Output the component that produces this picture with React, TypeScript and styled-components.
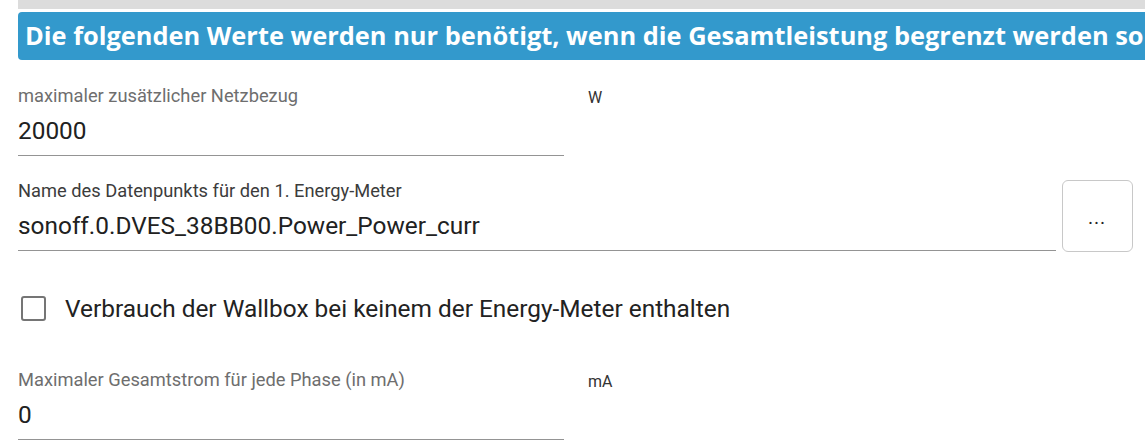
import React from 'react';
import styled, { createGlobalStyle } from 'styled-components';

const GlobalStyle = createGlobalStyle`
  html, body {
    margin: 0;
    padding: 0;
    background: #ffffff;
    overflow: hidden;
  }
  body {
    font-family: Roboto, "Noto Sans", sans-serif;
  }
`;

const Page = styled.div`
  width: 1145px;
  height: 448px;
  padding-left: 18px;
  box-sizing: border-box;
  overflow: hidden;
`;

const TopBar = styled.div`
  height: 9px;
  background: #dcdcdc;
`;

const InfoBanner = styled.div`
  margin-top: 3px;
  height: 48px;
  background: #3399cc;
  border-radius: 4px 0 0 4px;
  color: #ffffff;
  font-family: "Open Sans", "Noto Sans", sans-serif;
  font-weight: 700;
  font-size: 25.4px;
  line-height: 47px;
  padding-left: 7px;
  white-space: nowrap;
  overflow: hidden;
`;

const Form = styled.div`
  display: flex;
  flex-direction: column;
`;

const Row = styled.div<{ $top: number }>`
  display: flex;
  align-items: flex-start;
  margin-top: ${({ $top }) => $top}px;
`;

const Field = styled.div<{ $width: number }>`
  width: ${({ $width }) => $width}px;
  display: flex;
  flex-direction: column;
  border-bottom: 1px solid #949494;
`;

const Label = styled.label<{ $dark?: boolean }>`
  font-size: 18.3px;
  line-height: 20px;
  color: ${({ $dark }) => ($dark ? '#3c3c3c' : '#6e6e6e')};
`;

const Value = styled.div`
  font-size: 24.4px;
  line-height: 28px;
  color: #212121;
  padding: 11px 0 10px;
`;

const Unit = styled.span`
  margin-left: 24px;
  margin-top: 2px;
  font-size: 16px;
  color: #333333;
`;

const BrowseButton = styled.button`
  width: 71px;
  height: 72px;
  margin-left: 6px;
  margin-top: -1px;
  border: 1px solid #c8c8c8;
  border-radius: 6px;
  background: #ffffff;
  font-size: 14px;
  font-weight: 700;
  color: #222222;
  font-family: Roboto, sans-serif;
  padding: 6px 0 0;
  letter-spacing: 2px;
`;

const CheckRow = styled.label`
  display: flex;
  align-items: center;
  gap: 19px;
  margin-top: 42px;
  padding-left: 3px;
`;

const CheckBox = styled.span`
  width: 21px;
  height: 21px;
  border: 2px solid #757575;
  border-radius: 3px;
  box-sizing: content-box;
  display: inline-block;
`;

const CheckText = styled.span`
  font-size: 24.4px;
  color: #222222;
`;

export default function App() {
  return (
    <>
      <GlobalStyle />
      <Page>
        <TopBar />
        <InfoBanner>
          Die folgenden Werte werden nur benötigt, wenn die Gesamtleistung begrenzt werden sollen
        </InfoBanner>
        <Form>
          <Row $top={26}>
            <Field $width={546}>
              <Label>maximaler zusätzlicher Netzbezug</Label>
              <Value>20000</Value>
            </Field>
            <Unit>W</Unit>
          </Row>
          <Row $top={25}>
            <Field $width={1038}>
              <Label $dark>Name des Datenpunkts für den 1. Energy-Meter</Label>
              <Value>sonoff.0.DVES_38BB00.Power_Power_curr</Value>
            </Field>
            <BrowseButton>...</BrowseButton>
          </Row>
          <CheckRow>
            <CheckBox />
            <CheckText>Verbrauch der Wallbox bei keinem der Energy-Meter enthalten</CheckText>
          </CheckRow>
          <Row $top={47}>
            <Field $width={546}>
              <Label>Maximaler Gesamtstrom für jede Phase (in mA)</Label>
              <Value>0</Value>
            </Field>
            <Unit>mA</Unit>
          </Row>
        </Form>
      </Page>
    </>
  );
}
